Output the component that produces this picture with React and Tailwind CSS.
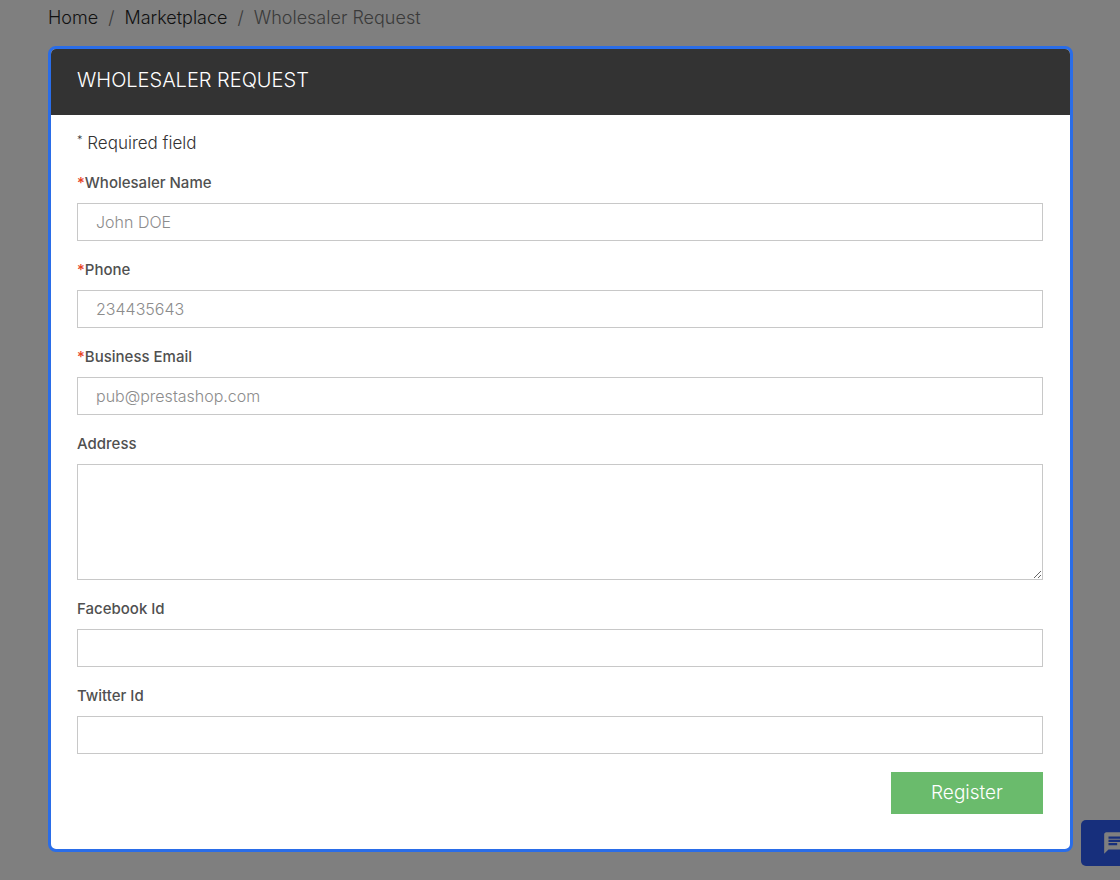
import React from "react";

const fields = [
  { id: "name", label: "Wholesaler Name", required: true, placeholder: "John DOE", type: "text" },
  { id: "phone", label: "Phone", required: true, placeholder: "234435643", type: "tel" },
  { id: "email", label: "Business Email", required: true, placeholder: "pub@prestashop.com", type: "email" },
  { id: "address", label: "Address", multiline: true },
  { id: "facebook", label: "Facebook Id", type: "text" },
  { id: "twitter", label: "Twitter Id", type: "text" },
];

function Field({ id, label, required, placeholder, type, multiline }) {
  return (
    <div className="flex flex-col">
      <label htmlFor={id} className="mb-2 text-[15px] leading-6 font-medium text-[#505050]">
        {required && <span className="text-[#e8441f]">*</span>}
        {label}
      </label>
      {multiline ? (
        <textarea id={id} className="h-[116px] w-full resize border border-[#c8c8c8] bg-white px-[18px] py-2 text-base text-[#555] outline-none" />
      ) : (
        <input
          id={id}
          type={type}
          required={required}
          placeholder={placeholder}
          className="h-[38px] w-full border border-[#c8c8c8] bg-white px-[18px] text-base font-light text-[#555] shadow-none outline-none placeholder:text-[#8c8c8c]"
        />
      )}
    </div>
  );
}

export default function App() {
  return (
    <div className="min-h-screen bg-[#7f7f7f] pt-1 pr-[47px] pb-7 pl-12 font-['Inter','Liberation_Sans',sans-serif]">
      <nav aria-label="Breadcrumb" className="flex gap-[10px] text-[18px] leading-7 font-light text-[#111]">
        <a href="#home">Home</a>
        <span className="text-[#3a3a3a]">/</span>
        <a href="#marketplace">Marketplace</a>
        <span className="text-[#3a3a3a]">/</span>
        <span className="text-[#3a3a3a]">Wholesaler Request</span>
      </nav>

      <main className="mt-[14px] overflow-hidden rounded-lg border-[3px] border-[#2a6de8] bg-white">
        <header className="bg-[#333] px-[26px] pt-[15px] pb-[19px]">
          <h1 className="text-xl leading-8 font-light text-white">WHOLESALER REQUEST</h1>
        </header>
        <form className="pt-3 pr-[27px] pb-[35px] pl-[26px]" onSubmit={(e) => e.preventDefault()}>
          <p className="text-[17px] leading-8 font-light text-[#333]">
            <sup className="text-[11px]">*</sup> Required field
          </p>
          <div className="mt-3 flex flex-col gap-[17px]">
            {fields.map((f) => (
              <Field key={f.id} {...f} />
            ))}
          </div>
          <div className="mt-[18px] flex justify-end">
            <button type="submit" className="h-[42px] w-[152px] bg-[#6abb6c] text-[19px] font-light text-white">
              Register
            </button>
          </div>
        </form>
      </main>

      <button
        type="button"
        aria-label="Open chat"
        className="fixed right-0 bottom-[14px] flex h-[46px] w-[39px] items-center overflow-hidden rounded-l-[5px] bg-[#172f7c] pl-[21px] text-[#7f7f7f]"
      >
        <svg viewBox="0 0 24 24" fill="currentColor" className="size-[26px] shrink-0" aria-hidden="true">
          <path d="M20 2H4c-1.1 0-1.99.9-1.99 2L2 22l4-4h14c1.1 0 2-.9 2-2V4c0-1.1-.9-2-2-2zM6 9h12v2H6V9zm8 5H6v-2h8v2zm4-6H6V6h12v2z" />
        </svg>
      </button>
    </div>
  );
}
